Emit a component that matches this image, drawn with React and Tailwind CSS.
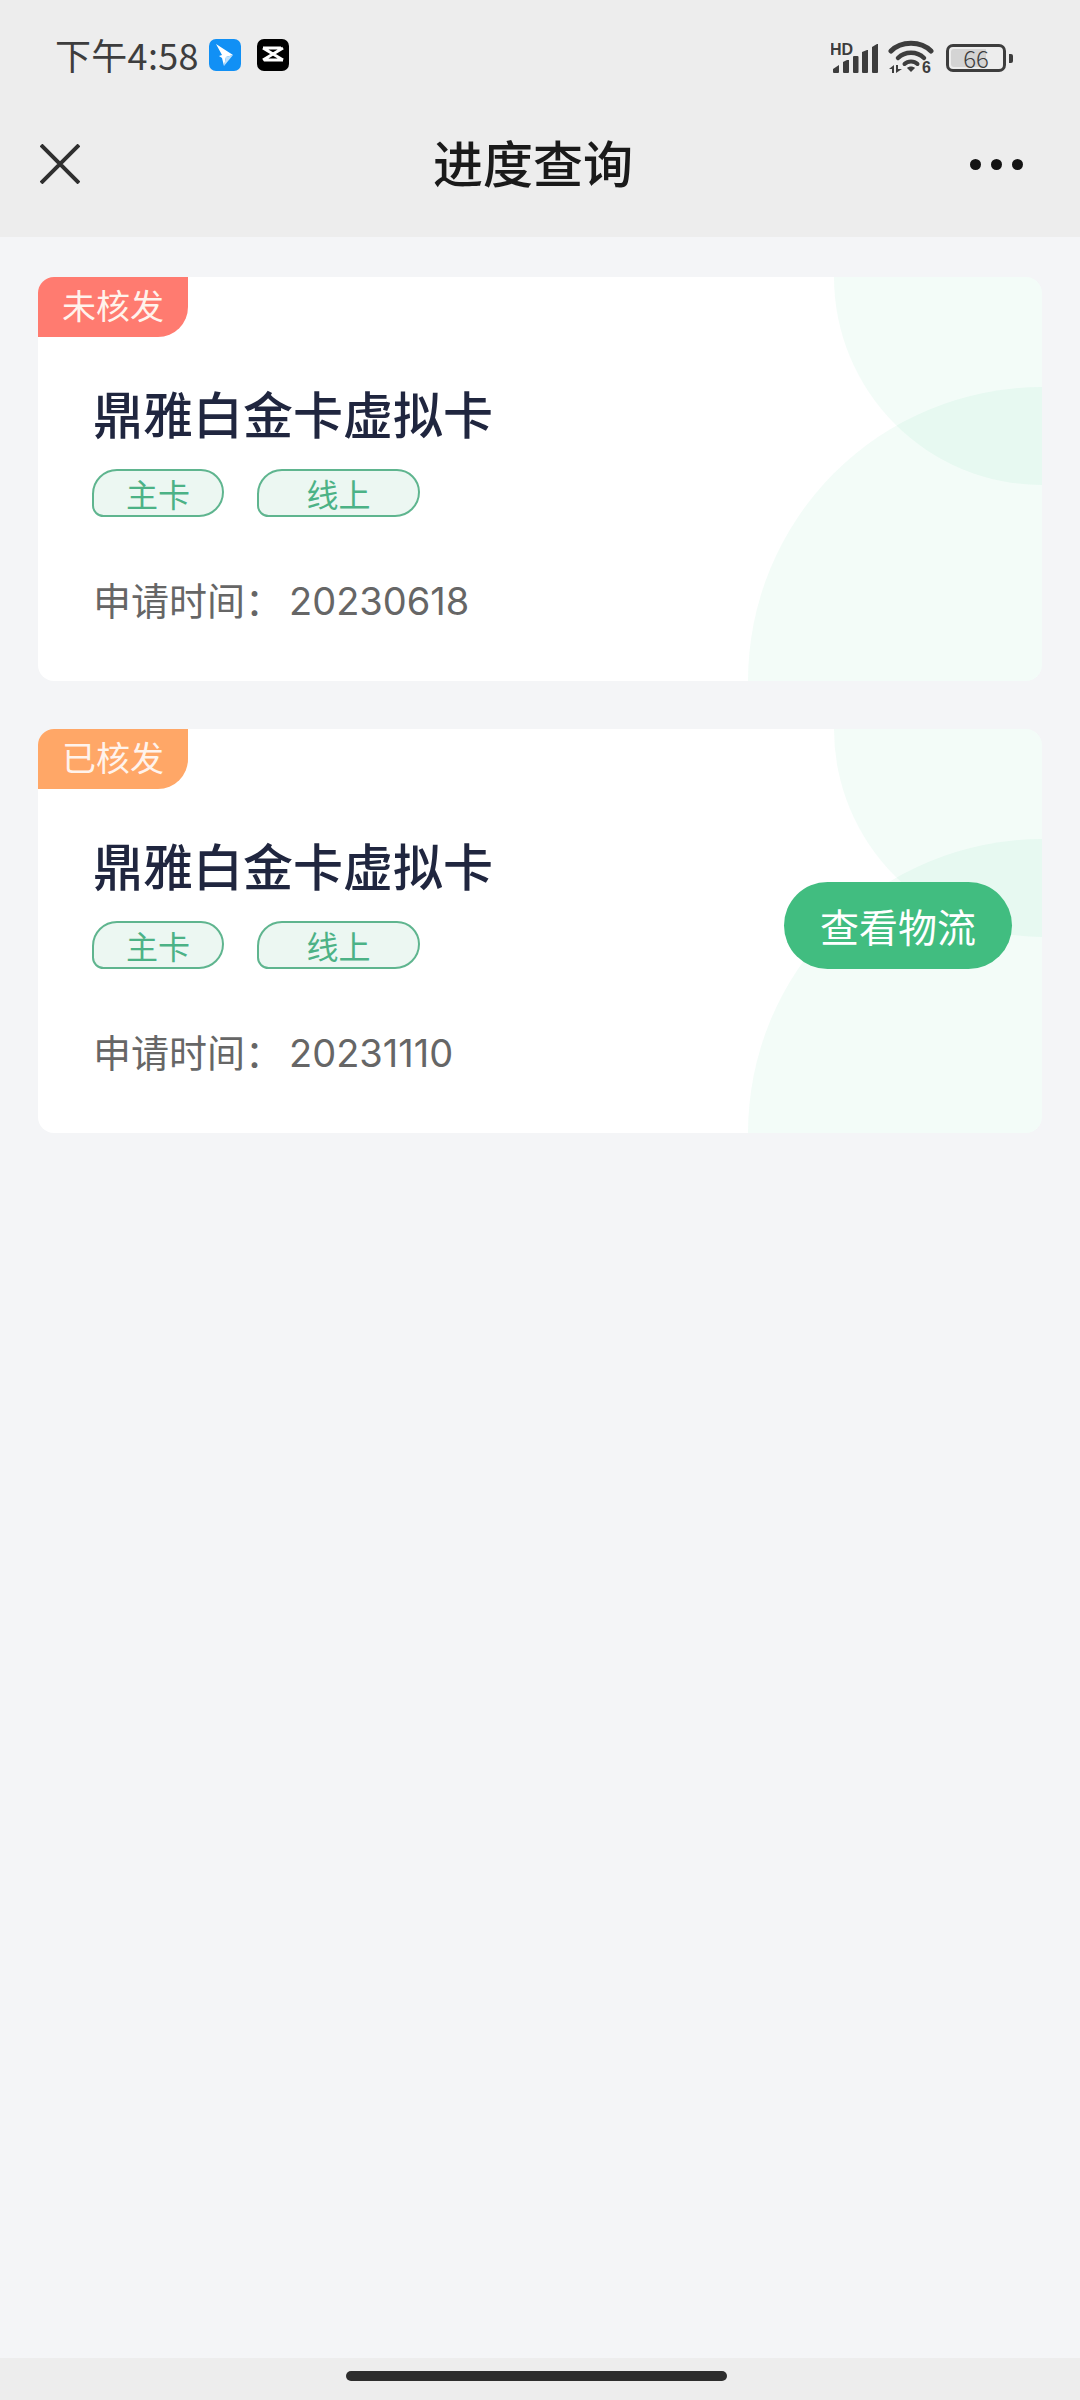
import React from 'react';

const font = { fontFamily: '"Noto Sans CJK SC", "Noto Sans", sans-serif' };

function SignalIcon() {
  return (
    <svg width="48" height="36" viewBox="0 -3 48 36" className="block">
      <text x="-1" y="12" fontSize="16" fontWeight="700" fontFamily="Liberation Sans, sans-serif" fill="#3d3d3d">HD</text>
      <g fill="#3d3d3d">
        <path d="M2 29v-3l6-4v7a1 1 0 0 1-1 1H3a1 1 0 0 1-1-1z" />
        <path d="M12 29V19l4-2 2 0v12a1 1 0 0 1-1 1h-4a1 1 0 0 1-1-1z" />
        <rect x="22" y="13" width="5.500" height="17" rx="1" />
        <path d="M31 29V9l5-2h1v22a1 1 0 0 1-1 1h-4a1 1 0 0 1-1-1z" />
        <path d="M41 29V4l5-3h1v28a1 1 0 0 1-1 1h-4a1 1 0 0 1-1-1z" />
      </g>
    </svg>
  );
}

function WifiIcon() {
  return (
    <svg width="46" height="38" viewBox="0 0 46 38" className="block">
      <g fill="none" stroke="#3d3d3d" strokeLinecap="round">
        <path d="M3 12C13 1.500 33 1.500 43 12" strokeWidth="5" />
        <path d="M10 19C17 12 29 12 36 19" strokeWidth="4.500" />
        <path d="M16.500 25C20 21.500 26 21.500 29.500 25" strokeWidth="4" />
      </g>
      <path d="M19 29C21 27 25 27 27 29L23 33z" fill="#3d3d3d" />
      <path d="M1 30l5-4v8h-2v-4zM8 26h2v4h4l-6 4z" fill="#3d3d3d" />
      <text x="34" y="34" fontSize="16" fontWeight="700" fontFamily="Liberation Sans, sans-serif" fill="#3d3d3d">6</text>
    </svg>
  );
}

function BatteryIcon() {
  return (
    <div className="flex items-center gap-[3px]">
      <div className="relative h-[28px] w-[60px] rounded-[7px] border-[3px] border-[#3d3d3d]">
        <div className="absolute inset-y-[2px] left-[2px] w-[35px] rounded-l-[3px] bg-[#d4d4d4]" />
        <div className="relative flex h-full items-center justify-center text-[24px] leading-[22px] font-light text-[#3d3d3d]" style={font}>66</div>
      </div>
      <div className="h-[9px] w-[4px] rounded-r-[2px] bg-[#3d3d3d]" />
    </div>
  );
}

function StatusBar() {
  return (
    <div className="flex h-[110px] items-start justify-between pl-[55px] pr-[67px] pt-[39px]">
      <div className="flex items-center">
        <span className="-mt-[2px] text-[36px] leading-[32px] tracking-[0.3px] text-[#3d3d3d]" style={font}>下午4:58</span>
        <div className="ml-[10px] flex h-[32px] w-[32px] items-center justify-center rounded-[7px] bg-[#1190f5]">
          <svg width="22" height="26" viewBox="0 0 22 26">
            <path d="M2 2l17 11-7 2-2 9-2-8-3-2 3-1z" fill="#ffffff" />
            <path d="M12 15l7-2-9 11z" fill="#bfe2fc" />
          </svg>
        </div>
        <div className="ml-[16px] flex h-[32px] w-[32px] items-center justify-center rounded-[7px] bg-black">
          <svg width="24" height="20" viewBox="0 0 24 20">
            <path d="M2 3l20 12M22 3L2 15M2 3h18M3 15h19" fill="none" stroke="#ffffff" strokeWidth="3" />
          </svg>
        </div>
      </div>
      <div className="flex items-center gap-[9px]">
        <SignalIcon />
        <WifiIcon />
        <div className="ml-[3px]">
          <BatteryIcon />
        </div>
      </div>
    </div>
  );
}

function NavBar() {
  return (
    <div className="flex h-[127px] items-start justify-between pl-[40px] pr-[57px] pt-[34px]">
      <svg width="40" height="40" viewBox="0 0 40 40" className="block">
        <path d="M1 1l38 38M39 1L1 39" stroke="#2f2f2f" strokeWidth="4" fill="none" />
      </svg>
      <h1 className="-mr-[16px] -mt-[5px] text-[50px] leading-[44px] font-medium text-[#1a1a1a]" style={font}>进度查询</h1>
      <div className="flex h-[40px] items-center gap-[10px]">
        <span className="h-[11px] w-[11px] rounded-full bg-[#141414]" />
        <span className="h-[11px] w-[11px] rounded-full bg-[#141414]" />
        <span className="h-[11px] w-[11px] rounded-full bg-[#141414]" />
      </div>
    </div>
  );
}

function Chip({ children, className }) {
  return (
    <span className={`flex h-[48px] items-center justify-center rounded-[26px_24px_26px_12px] border-2 border-[#5fb58f] bg-[#ecf7f2] text-[32px] leading-none text-[#4cb286] ${className}`}>
      {children}
    </span>
  );
}

function ProgressCard({ status, statusColor, date, showButton }) {
  return (
    <div className="relative h-[404px] overflow-hidden rounded-[16px] bg-white" style={font}>
      <div className="absolute right-0 top-0 h-[208px] w-[208px] rounded-bl-full bg-[#0fc373]/5" />
      <div className="absolute bottom-0 right-0 h-[294px] w-[294px] rounded-tl-full bg-[#0fc373]/5" />
      <div className={`relative flex h-[60px] w-[150px] items-center justify-center rounded-br-[30px] text-[34px] leading-[56px] text-[#fff3ec] ${statusColor}`}>
        <span className="-mt-[4px]">{status}</span>
      </div>
      <div className="relative flex items-start justify-between pl-[55px] pr-[30px] pt-[40px]">
        <div>
          <div className="text-[50px] leading-[70px] font-medium text-[#20263f]">鼎雅白金卡虚拟卡</div>
          <div className="-ml-[1px] mt-[22px] flex gap-[33px]">
            <Chip className="w-[132px]">主卡</Chip>
            <Chip className="w-[163px]">线上</Chip>
          </div>
          <div className="mt-[54px] text-[38px] leading-[56px] text-[#666666]">
            申请时间：<span className="ml-[6px] font-['Inter'] text-[38px]">{date}</span>
          </div>
        </div>
        {showButton && (
          <button className="mt-[53px] h-[87px] w-[228px] rounded-full bg-[#41bd80] text-[39px] leading-none text-white">
            查看物流
          </button>
        )}
      </div>
    </div>
  );
}

export default function App() {
  return (
    <div className="flex h-[2400px] w-[1080px] flex-col bg-[#f4f5f7]">
      <div className="bg-[#ededed]">
        <StatusBar />
        <NavBar />
      </div>
      <div className="flex flex-1 flex-col gap-[48px] pl-[38px] pr-[38px] pt-[40px]">
        <ProgressCard status="未核发" statusColor="bg-[#ff7b70]" date="20230618" />
        <ProgressCard status="已核发" statusColor="bg-[#ffa767]" date="20231110" showButton />
      </div>
      <div className="flex h-[42px] justify-center bg-[#ededed] pr-[7px] pt-[13px]">
        <div className="h-[10px] w-[381px] rounded-full bg-[#2d2d2d]" />
      </div>
    </div>
  );
}
